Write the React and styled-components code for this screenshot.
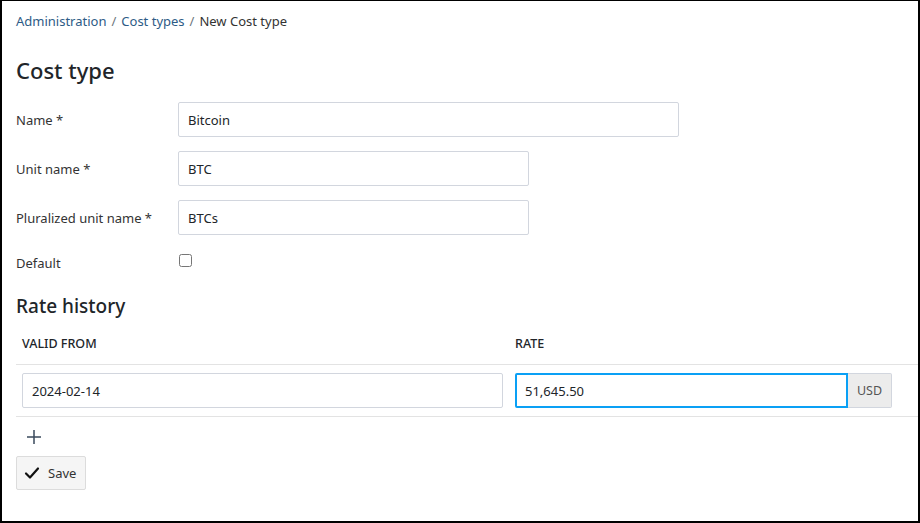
import React from "react";
import styled, { createGlobalStyle } from "styled-components";

const GlobalStyle = createGlobalStyle`
  html, body {
    margin: 0;
    padding: 0;
    background: #fff;
  }
  body {
    font-family: "Noto Sans", "Open Sans", sans-serif;
    color: #212529;
  }
`;

const Frame = styled.div`
  box-sizing: border-box;
  width: 920px;
  height: 523px;
  border-style: solid;
  border-color: #000;
  border-width: 1px 2px 2px 2px;
  padding: 9px 0 0 14px;
  font-size: 13px;
  overflow: hidden;
`;

const Breadcrumb = styled.nav`
  display: flex;
  align-items: center;
  gap: 5px;
  height: 22px;
  color: #333;
`;

const Crumb = styled.a`
  color: #2d5b86;
  text-decoration: none;
`;

const Sep = styled.span`
  color: #6c757d;
`;

const Title = styled.h1`
  margin: 23px 0 0;
  font-size: 22px;
  font-weight: 500;
  line-height: 30px;
  color: #212529;
`;

const Form = styled.div`
  display: flex;
  flex-direction: column;
  gap: 14px;
  margin-top: 17px;
`;

const Row = styled.div`
  display: grid;
  grid-template-columns: 162px auto;
  align-items: center;
  min-height: ${(p) => (p.$short ? "20px" : "35px")};
`;

const Label = styled.label`
  color: #333;
  padding-top: ${(p) => (p.$offset ? "5px" : "0")};
`;

const Input = styled.input`
  box-sizing: border-box;
  flex: 1;
  min-width: 0;
  width: ${(p) => p.$w || "100%"};
  height: 35px;
  padding: 0 9px;
  border: 1px solid #d2d6de;
  border-radius: ${(p) => (p.$joined ? "2px 0 0 2px" : "2px")};
  font: inherit;
  font-size: 13px;
  color: #212529;
  background: #fff;
  outline: none;

  &:focus {
    border: 2px solid #0aa0f5;
    padding: 0 8px;
  }
`;

const Check = styled.input`
  margin: 0 0 0 1px;
  width: 13px;
  height: 13px;
`;

const Subtitle = styled.h2`
  margin: 21px 0 0;
  font-size: 19px;
  font-weight: 500;
  line-height: 26px;
  color: #212529;
`;

const Table = styled.div`
  margin-top: 8px;
  display: grid;
  grid-template-columns: 493px 1fr;
`;

const HeadCell = styled.div`
  padding: 7px 6px 0;
  height: 38px;
  box-sizing: border-box;
  font-weight: 500;
  font-size: 12.5px;
  color: #212529;
  border-bottom: 1px solid #e3e3e3;
  line-height: 20px;
`;

const Cell = styled.div`
  padding: 8px ${(p) => (p.$last ? "26px" : "6px")} 8px 6px;
  border-bottom: 1px solid #e3e3e3;
  display: flex;
`;

const AddOn = styled.span`
  flex-shrink: 0;
  display: flex;
  align-items: center;
  justify-content: center;
  box-sizing: border-box;
  width: 44px;
  height: 35px;
  background: #ececec;
  border: 1px solid #d2d6de;
  border-left: none;
  border-radius: 0 2px 2px 0;
  color: #555;
  font-size: 12.5px;
`;

const AddButton = styled.button`
  margin: 10px 0 0 8px;
  padding: 0;
  width: 20px;
  height: 20px;
  border: none;
  background: none;
  display: flex;
  align-items: center;
  justify-content: center;
  cursor: pointer;
`;

const SaveButton = styled.button`
  margin-top: 9px;
  display: flex;
  align-items: center;
  gap: 8px;
  height: 34px;
  padding: 0 9px 0 7px;
  border: 1px solid #dcdcdc;
  border-radius: 2px;
  background: #f5f5f5;
  font: inherit;
  font-size: 13px;
  color: #333;
  cursor: pointer;
`;

export default function App() {
  return (
    <>
      <GlobalStyle />
      <Frame>
        <Breadcrumb>
          <Crumb href="#">Administration</Crumb>
          <Sep>/</Sep>
          <Crumb href="#">Cost types</Crumb>
          <Sep>/</Sep>
          <span>New Cost type</span>
        </Breadcrumb>

        <Title>Cost type</Title>

        <Form>
          <Row>
            <Label>Name *</Label>
            <Input $w="501px" defaultValue="Bitcoin" />
          </Row>
          <Row>
            <Label>Unit name *</Label>
            <Input $w="351px" defaultValue="BTC" />
          </Row>
          <Row>
            <Label>Pluralized unit name *</Label>
            <Input $w="351px" defaultValue="BTCs" />
          </Row>
          <Row $short>
            <Label $offset>Default</Label>
            <Check type="checkbox" />
          </Row>
        </Form>

        <Subtitle>Rate history</Subtitle>

        <Table>
          <HeadCell>VALID FROM</HeadCell>
          <HeadCell>RATE</HeadCell>
          <Cell>
            <Input defaultValue="2024-02-14" />
          </Cell>
          <Cell $last>
            <Input $joined defaultValue="51,645.50" autoFocus />
            <AddOn>USD</AddOn>
          </Cell>
        </Table>

        <AddButton aria-label="Add rate">
          <svg width="16" height="16" viewBox="0 0 16 16">
            <path d="M8 1v14M1 8h14" stroke="#3a4a5c" strokeWidth="1.5" fill="none" />
          </svg>
        </AddButton>

        <SaveButton>
          <svg width="16" height="16" viewBox="0 0 16 16">
            <path
              d="M2 8.5l4 4L14 3.5"
              stroke="#111"
              strokeWidth="2.2"
              fill="none"
              strokeLinecap="round"
              strokeLinejoin="round"
            />
          </svg>
          Save
        </SaveButton>
      </Frame>
    </>
  );
}
